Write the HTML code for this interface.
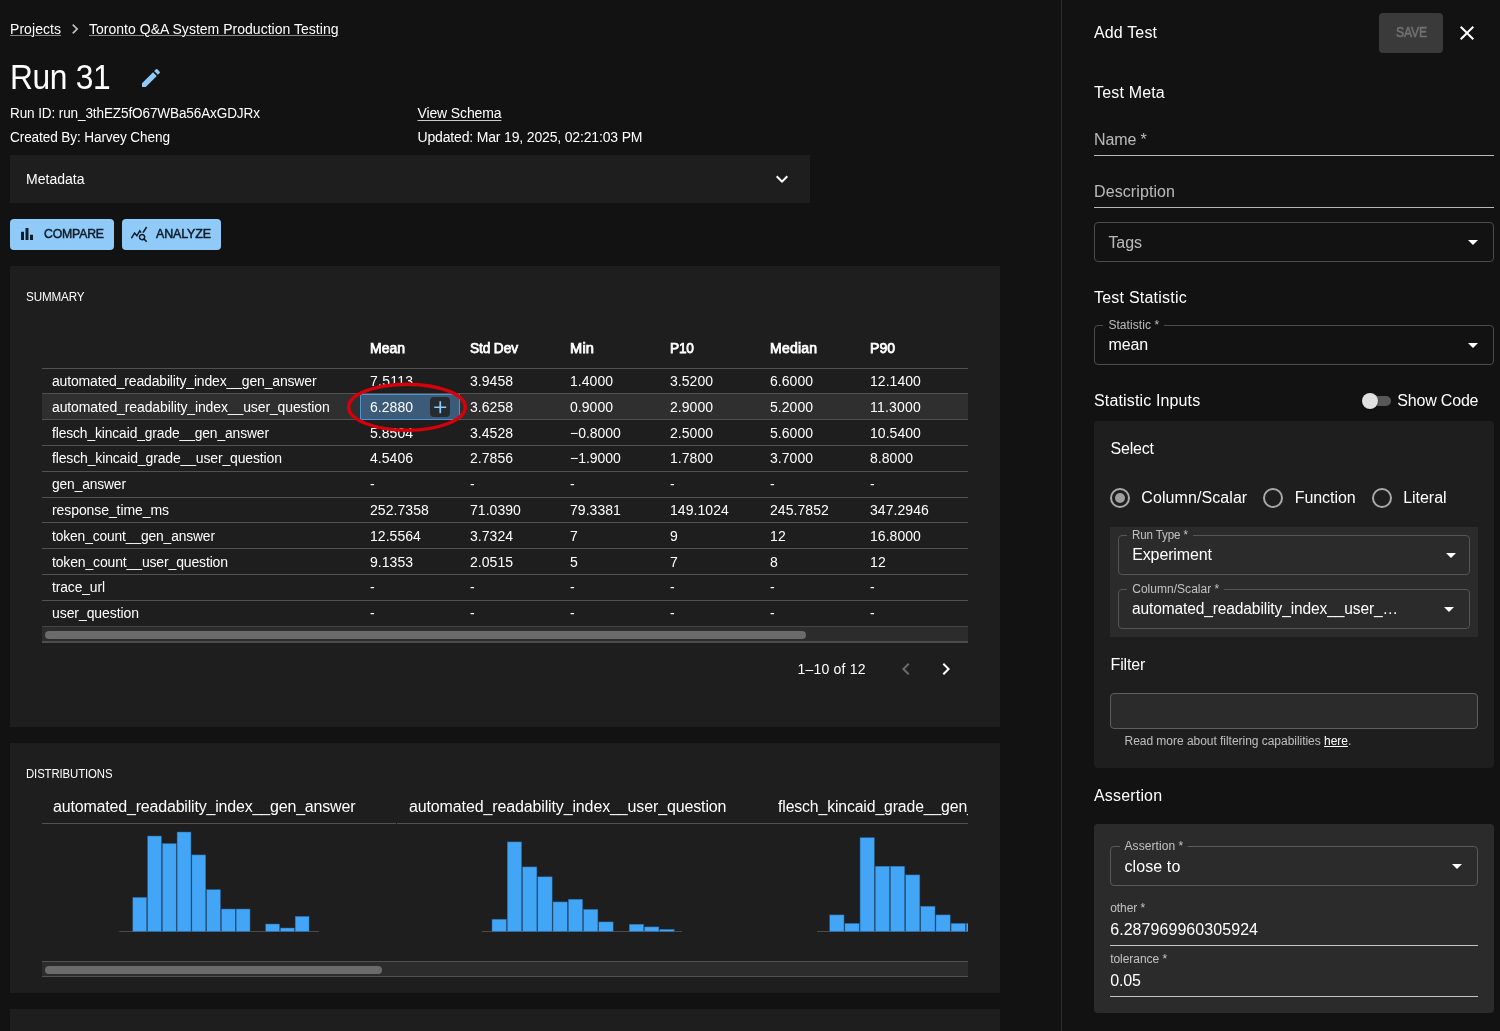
<!DOCTYPE html>
<html lang="en"><head><meta charset="utf-8"><title>Run 31</title><style>
html,body{margin:0;padding:0}
body{width:1500px;height:1031px;overflow:hidden;background:#121212;color:#fff;font-family:"Liberation Sans",sans-serif;position:relative}
.t{position:absolute;white-space:nowrap;color:#fff}
.root{position:absolute;left:0;top:0;width:1500px;height:1031px;overflow:hidden;will-change:transform}
.u{text-decoration:underline;text-decoration-thickness:1px;text-underline-offset:1px;text-decoration-color:rgba(255,255,255,.5)}
.u2{text-underline-offset:2px;text-decoration-color:rgba(255,255,255,.78)}
.sec{color:rgba(255,255,255,.7)}
.b{font-weight:bold}
svg{position:absolute;overflow:visible}
.m{-webkit-text-stroke:.5px currentColor}
.m2{-webkit-text-stroke:.75px currentColor}
</style></head><body>
<div class="root">
<span class="t u" style="font-size: 14px; line-height: 16px; left: 10px; top: 21px; letter-spacing: 0.06px;">Projects</span>
<svg style="left:64.75px;top:19.1px" width="20" height="20" viewBox="0 0 24 24"><path fill="#bdbdbd" d="M10 6 8.59 7.41 13.17 12l-4.58 4.59L10 18l6-6z"></path></svg>
<span class="t u" style="font-size: 14px; line-height: 16px; left: 89px; top: 21px; letter-spacing: 0.02px;">Toronto Q&amp;A System Production Testing</span>
<span class="t" style="font-size: 35px; line-height: 39px; left: 9.5px; top: 57px; letter-spacing: -0.374px; transform: scaleX(0.9063); transform-origin: 0px 50%;">Run 31</span>
<svg style="left:139px;top:65.8px" width="24" height="24" viewBox="0 0 24 24"><path fill="#90caf9" d="M3 17.25V21h3.75L17.81 9.94l-3.750-3.75zM20.71 7.040c.39-.39.39-1.020 0-1.410l-2.340-2.340a.9959.9959 0 0 0-1.410 0l-1.830 1.830 3.750 3.750z"></path></svg>
<span class="t" style="font-size: 14px; line-height: 16px; left: 10px; top: 105px; letter-spacing: -0.123px; transform: scaleX(0.9683); transform-origin: 0px 50%;">Run ID: run_3thEZ5fO67WBa56AxGDJRx</span>
<span class="t" style="font-size: 14px; line-height: 16px; left: 10px; top: 129px; letter-spacing: -0.112px; transform: scaleX(0.9713); transform-origin: 0px 50%;">Created By: Harvey Cheng</span>
<span class="t u u2" style="font-size: 14px; line-height: 16px; left: 417.5px; top: 105px; letter-spacing: -0.134px;">View Schema</span>
<span class="t" style="font-size: 14px; line-height: 16px; left: 417.5px; top: 129px; letter-spacing: -0.163px;">Updated: Mar 19, 2025, 02:21:03 PM</span>
<div style="position:absolute;left:10px;top:155px;width:800px;height:48px;background:#1e1e1e"></div>
<span class="t" style="font-size: 14px; line-height: 16px; left: 26px; top: 171px; letter-spacing: 0.018px;">Metadata</span>
<svg style="left:769.5px;top:167px" width="24" height="24" viewBox="0 0 24 24"><path fill="#fff" d="M16.59 8.59 12 13.17 7.41 8.59 6 10l6 6 6-6z"></path></svg>
<div style="position:absolute;left:10px;top:219px;width:104px;height:31px;background:#90caf9;border-radius:4px"></div>
<svg style="left:18px;top:224.5px" width="18" height="18" viewBox="0 0 24 24"><path fill="#0f1c29" d="M4 9h4v11H4zm12 4h4v7h-4zm-6-9h4v16h-4z"></path></svg>
<span class="t m" style="color: rgb(15, 28, 41); font-size: 13px; line-height: 15px; left: 44px; top: 226px; letter-spacing: -0.172px; transform: scaleX(0.9414); transform-origin: 0px 50%;">COMPARE</span>
<div style="position:absolute;left:122px;top:219px;width:99px;height:31px;background:#90caf9;border-radius:4px"></div>
<svg style="left:130px;top:225px" width="18" height="18" viewBox="0 0 24 24"><path fill="#0f1c29" d="M19.88 18.470c.44-.7.7-1.510.7-2.390 0-2.490-2.010-4.500-4.500-4.500s-4.500 2.010-4.500 4.500 2.010 4.500 4.490 4.500c.88 0 1.700-.26 2.390-.7L21.580 23 23 21.580zm-3.800.11c-1.380 0-2.500-1.120-2.500-2.500s1.120-2.500 2.500-2.500 2.500 1.120 2.500 2.500-1.120 2.500-2.500 2.500m-.36-8.500c-.74.020-1.450.18-2.100.45l-.55-.83-3.800 6.180-3.010-3.520-3.630 5.810L1 17l5-8 3 3.500L13 6zm2.590.5c-.64-.28-1.330-.45-2.050-.49L21.380 2 23 3.180z"></path></svg>
<span class="t m" style="color: rgb(15, 28, 41); font-size: 13px; line-height: 15px; left: 156px; top: 226px; letter-spacing: -0.152px; transform: scaleX(0.9587); transform-origin: 0px 50%;">ANALYZE</span>
<div style="position:absolute;left:10px;top:266px;width:990px;height:461px;background:#1e1e1e"></div>
<span class="t" style="font-size: 12px; line-height: 14px; left: 25.5px; top: 290px; letter-spacing: -0.157px; transform: scaleX(0.9721); transform-origin: 0px 50%;">SUMMARY</span>
<span class="t m2" style="font-size: 14px; line-height: 16px; left: 370px; top: 340px; letter-spacing: -0.01px;">Mean</span>
<span class="t m2" style="font-size: 14px; line-height: 16px; left: 470px; top: 340px; letter-spacing: -0.127px; transform: scaleX(0.9786); transform-origin: 0px 50%;">Std Dev</span>
<span class="t m2" style="font-size: 14px; line-height: 16px; left: 570px; top: 340px; letter-spacing: 0.216px; transform: scaleX(1.0437); transform-origin: 0px 50%;">Min</span>
<span class="t m2" style="font-size: 14px; line-height: 16px; left: 670px; top: 340px; letter-spacing: -0.191px; transform: scaleX(0.978); transform-origin: 0px 50%;">P10</span>
<span class="t m2" style="font-size: 14px; line-height: 16px; left: 770px; top: 340px; letter-spacing: 0.216px;">Median</span>
<span class="t m2" style="font-size: 14px; line-height: 16px; left: 870px; top: 340px; letter-spacing: 0.039px;">P90</span>
<div style="position:absolute;left:42px;top:393px;width:926px;height:27px;background:#2f2f2f"></div>
<div style="position:absolute;left:42px;top:368px;width:926px;height:1px;background:#515151"></div>
<div style="position:absolute;left:42px;top:393px;width:926px;height:1px;background:#515151"></div>
<div style="position:absolute;left:42px;top:419px;width:926px;height:1px;background:#515151"></div>
<div style="position:absolute;left:42px;top:445px;width:926px;height:1px;background:#515151"></div>
<div style="position:absolute;left:42px;top:471px;width:926px;height:1px;background:#515151"></div>
<div style="position:absolute;left:42px;top:497px;width:926px;height:1px;background:#515151"></div>
<div style="position:absolute;left:42px;top:522px;width:926px;height:1px;background:#515151"></div>
<div style="position:absolute;left:42px;top:548px;width:926px;height:1px;background:#515151"></div>
<div style="position:absolute;left:42px;top:574px;width:926px;height:1px;background:#515151"></div>
<div style="position:absolute;left:42px;top:600px;width:926px;height:1px;background:#515151"></div>
<div style="position:absolute;left:42px;top:626px;width:926px;height:1px;background:#454545"></div>
<div style="position:absolute;left:360px;top:393.5px;width:100px;height:26px;background:#3b5b78;border:1px solid #4f94d4;box-sizing:border-box"></div>
<div style="position:absolute;left:430px;top:397px;width:20px;height:20px;background:#262b30;border-radius:4px"></div>
<svg style="left:429.75px;top:396.85px" width="20.5" height="20.5" viewBox="0 0 24 24"><path fill="#90caf9" d="M19 13h-6v6h-2v-6H5v-2h6V5h2v6h6z"></path></svg>
<span class="t" style="font-size: 14px; line-height: 16px; left: 52px; top: 373px; letter-spacing: -0.165px;">automated_readability_index__gen_answer</span>
<span class="t" style="font-size: 14px; line-height: 16px; left: 370px; top: 373px; letter-spacing: 0.244px;">7.5113</span>
<span class="t" style="font-size: 14px; line-height: 16px; left: 470px; top: 373px; letter-spacing: 0.034px;">3.9458</span>
<span class="t" style="font-size: 14px; line-height: 16px; left: 570px; top: 373px; letter-spacing: 0.034px;">1.4000</span>
<span class="t" style="font-size: 14px; line-height: 16px; left: 670px; top: 373px; letter-spacing: 0.034px;">3.5200</span>
<span class="t" style="font-size: 14px; line-height: 16px; left: 770px; top: 373px; letter-spacing: 0.034px;">6.6000</span>
<span class="t" style="font-size: 14px; line-height: 16px; left: 870px; top: 373px; letter-spacing: 0.048px;">12.1400</span>
<span class="t" style="font-size: 14px; line-height: 16px; left: 52px; top: 399px; letter-spacing: -0.118px;">automated_readability_index__user_question</span>
<span class="t" style="font-size: 14px; line-height: 16px; left: 370px; top: 399px; letter-spacing: 0.034px;">6.2880</span>
<span class="t" style="font-size: 14px; line-height: 16px; left: 470px; top: 399px; letter-spacing: 0.034px;">3.6258</span>
<span class="t" style="font-size: 14px; line-height: 16px; left: 570px; top: 399px; letter-spacing: 0.034px;">0.9000</span>
<span class="t" style="font-size: 14px; line-height: 16px; left: 670px; top: 399px; letter-spacing: 0.034px;">2.9000</span>
<span class="t" style="font-size: 14px; line-height: 16px; left: 770px; top: 399px; letter-spacing: 0.034px;">5.2000</span>
<span class="t" style="font-size: 14px; line-height: 16px; left: 870px; top: 399px; letter-spacing: 0.22px;">11.3000</span>
<span class="t" style="font-size: 14px; line-height: 16px; left: 52px; top: 425px; letter-spacing: -0.11px; transform: scaleX(0.9864); transform-origin: 0px 50%;">flesch_kincaid_grade__gen_answer</span>
<span class="t" style="font-size: 14px; line-height: 16px; left: 370px; top: 425px; letter-spacing: 0.034px;">5.8504</span>
<span class="t" style="font-size: 14px; line-height: 16px; left: 470px; top: 425px; letter-spacing: 0.034px;">3.4528</span>
<span class="t" style="font-size: 14px; line-height: 16px; left: 570px; top: 425px; letter-spacing: -0.017px;">−0.8000</span>
<span class="t" style="font-size: 14px; line-height: 16px; left: 670px; top: 425px; letter-spacing: 0.034px;">2.5000</span>
<span class="t" style="font-size: 14px; line-height: 16px; left: 770px; top: 425px; letter-spacing: 0.034px;">5.6000</span>
<span class="t" style="font-size: 14px; line-height: 16px; left: 870px; top: 425px; letter-spacing: 0.048px;">10.5400</span>
<span class="t" style="font-size: 14px; line-height: 16px; left: 52px; top: 450px; letter-spacing: -0.149px;">flesch_kincaid_grade__user_question</span>
<span class="t" style="font-size: 14px; line-height: 16px; left: 370px; top: 450px; letter-spacing: 0.034px;">4.5406</span>
<span class="t" style="font-size: 14px; line-height: 16px; left: 470px; top: 450px; letter-spacing: 0.034px;">2.7856</span>
<span class="t" style="font-size: 14px; line-height: 16px; left: 570px; top: 450px; letter-spacing: -0.017px;">−1.9000</span>
<span class="t" style="font-size: 14px; line-height: 16px; left: 670px; top: 450px; letter-spacing: 0.034px;">1.7800</span>
<span class="t" style="font-size: 14px; line-height: 16px; left: 770px; top: 450px; letter-spacing: 0.034px;">3.7000</span>
<span class="t" style="font-size: 14px; line-height: 16px; left: 870px; top: 450px; letter-spacing: 0.034px;">8.8000</span>
<span class="t" style="font-size: 14px; line-height: 16px; left: 52px; top: 476px; letter-spacing: -0.129px; transform: scaleX(0.9851); transform-origin: 0px 50%;">gen_answer</span>
<span class="t" style="font-size: 14px; line-height: 16px; left: 370px; top: 476px;">-</span>
<span class="t" style="font-size: 14px; line-height: 16px; left: 470px; top: 476px;">-</span>
<span class="t" style="font-size: 14px; line-height: 16px; left: 570px; top: 476px;">-</span>
<span class="t" style="font-size: 14px; line-height: 16px; left: 670px; top: 476px;">-</span>
<span class="t" style="font-size: 14px; line-height: 16px; left: 770px; top: 476px;">-</span>
<span class="t" style="font-size: 14px; line-height: 16px; left: 870px; top: 476px;">-</span>
<span class="t" style="font-size: 14px; line-height: 16px; left: 52px; top: 502px; letter-spacing: -0.085px;">response_time_ms</span>
<span class="t" style="font-size: 14px; line-height: 16px; left: 370px; top: 502px; letter-spacing: 0.056px;">252.7358</span>
<span class="t" style="font-size: 14px; line-height: 16px; left: 470px; top: 502px; letter-spacing: 0.048px;">71.0390</span>
<span class="t" style="font-size: 14px; line-height: 16px; left: 570px; top: 502px; letter-spacing: 0.048px;">79.3381</span>
<span class="t" style="font-size: 14px; line-height: 16px; left: 670px; top: 502px; letter-spacing: 0.056px;">149.1024</span>
<span class="t" style="font-size: 14px; line-height: 16px; left: 770px; top: 502px; letter-spacing: 0.056px;">245.7852</span>
<span class="t" style="font-size: 14px; line-height: 16px; left: 870px; top: 502px; letter-spacing: 0.056px;">347.2946</span>
<span class="t" style="font-size: 14px; line-height: 16px; left: 52px; top: 528px; letter-spacing: -0.116px; transform: scaleX(0.9844); transform-origin: 0px 50%;">token_count__gen_answer</span>
<span class="t" style="font-size: 14px; line-height: 16px; left: 370px; top: 528px; letter-spacing: 0.048px;">12.5564</span>
<span class="t" style="font-size: 14px; line-height: 16px; left: 470px; top: 528px; letter-spacing: 0.034px;">3.7324</span>
<span class="t" style="font-size: 14px; line-height: 16px; left: 570px; top: 528px;">7</span>
<span class="t" style="font-size: 14px; line-height: 16px; left: 670px; top: 528px;">9</span>
<span class="t" style="font-size: 14px; line-height: 16px; left: 770px; top: 528px; letter-spacing: 0.122px;">12</span>
<span class="t" style="font-size: 14px; line-height: 16px; left: 870px; top: 528px; letter-spacing: 0.048px;">16.8000</span>
<span class="t" style="font-size: 14px; line-height: 16px; left: 52px; top: 554px; letter-spacing: -0.152px;">token_count__user_question</span>
<span class="t" style="font-size: 14px; line-height: 16px; left: 370px; top: 554px; letter-spacing: 0.034px;">9.1353</span>
<span class="t" style="font-size: 14px; line-height: 16px; left: 470px; top: 554px; letter-spacing: 0.034px;">2.0515</span>
<span class="t" style="font-size: 14px; line-height: 16px; left: 570px; top: 554px;">5</span>
<span class="t" style="font-size: 14px; line-height: 16px; left: 670px; top: 554px;">7</span>
<span class="t" style="font-size: 14px; line-height: 16px; left: 770px; top: 554px;">8</span>
<span class="t" style="font-size: 14px; line-height: 16px; left: 870px; top: 554px; letter-spacing: 0.122px;">12</span>
<span class="t" style="font-size: 14px; line-height: 16px; left: 52px; top: 579px; letter-spacing: -0.103px; transform: scaleX(0.988); transform-origin: 0px 50%;">trace_url</span>
<span class="t" style="font-size: 14px; line-height: 16px; left: 370px; top: 579px;">-</span>
<span class="t" style="font-size: 14px; line-height: 16px; left: 470px; top: 579px;">-</span>
<span class="t" style="font-size: 14px; line-height: 16px; left: 570px; top: 579px;">-</span>
<span class="t" style="font-size: 14px; line-height: 16px; left: 670px; top: 579px;">-</span>
<span class="t" style="font-size: 14px; line-height: 16px; left: 770px; top: 579px;">-</span>
<span class="t" style="font-size: 14px; line-height: 16px; left: 870px; top: 579px;">-</span>
<span class="t" style="font-size: 14px; line-height: 16px; left: 52px; top: 605px; letter-spacing: -0.079px;">user_question</span>
<span class="t" style="font-size: 14px; line-height: 16px; left: 370px; top: 605px;">-</span>
<span class="t" style="font-size: 14px; line-height: 16px; left: 470px; top: 605px;">-</span>
<span class="t" style="font-size: 14px; line-height: 16px; left: 570px; top: 605px;">-</span>
<span class="t" style="font-size: 14px; line-height: 16px; left: 670px; top: 605px;">-</span>
<span class="t" style="font-size: 14px; line-height: 16px; left: 770px; top: 605px;">-</span>
<span class="t" style="font-size: 14px; line-height: 16px; left: 870px; top: 605px;">-</span>
<svg style="left:340px;top:375px" width="140" height="64" viewBox="340 375 140 64"><ellipse cx="407" cy="407.2" rx="58.3" ry="23" fill="none" stroke="#d6000b" stroke-width="3.4"></ellipse></svg>
<div style="position:absolute;left:42px;top:627px;width:926px;height:14px;background:#2c2c2c"></div>
<div style="position:absolute;left:42px;top:641px;width:926px;height:2px;background:#4c4c4c"></div>
<div style="position:absolute;left:45px;top:631px;width:761px;height:8px;background:#6b6b6b;border-radius:4px"></div>
<span class="t" style="font-size: 14px; line-height: 16px; left: 797.5px; top: 661px; letter-spacing: 0.203px;">1–10 of 12</span>
<svg style="left:893.6px;top:656.8px" width="24" height="24" viewBox="0 0 24 24"><path fill="#6b6b6b" d="M15.41 7.41 14 6l-6 6 6 6 1.410-1.410L10.830 12z"></path></svg>
<svg style="left:934.2px;top:656.8px" width="24" height="24" viewBox="0 0 24 24"><path fill="#fff" d="M10 6 8.59 7.41 13.17 12l-4.580 4.590L10 18l6-6z"></path></svg>
<div style="position:absolute;left:10px;top:743px;width:990px;height:250px;background:#1e1e1e"></div>
<div style="position:absolute;left:10px;top:1009px;width:990px;height:30px;background:#1e1e1e"></div>
<span class="t" style="font-size: 12px; line-height: 14px; left: 25.5px; top: 767px; letter-spacing: -0.122px; transform: scaleX(0.9484); transform-origin: 0px 50%;">DISTRIBUTIONS</span>
<div style="position:absolute;left:42px;top:790px;width:926px;height:172px;overflow:hidden">
<span class="t" style="font-size: 16px; line-height: 17px; left: 11px; top: 8px; letter-spacing: -0.186px;">automated_readability_index__gen_answer</span>
<span class="t" style="font-size: 16px; line-height: 17px; left: 367px; top: 8px; letter-spacing: -0.132px;">automated_readability_index__user_question</span>
<span class="t" style="font-size: 16px; line-height: 17px; left: 736px; top: 8px; letter-spacing: -0.125px; transform: scaleX(0.9864); transform-origin: 0px 50%;">flesch_kincaid_grade__gen_answer</span>
<div style="position:absolute;left:0px;top:33px;width:354px;height:1px;background:#515151"></div>
<div style="position:absolute;left:355px;top:33px;width:670px;height:1px;background:#515151"></div>
<svg style="left:0;top:0" width="926" height="172" viewBox="42 790 926 172"><rect x="119.2" y="931.0" width="199.7" height="1" fill="#4a4a4a"></rect><rect x="132.80" y="897.30" width="13.91" height="34.20" fill="#42a5f5" stroke="#245f96" stroke-width="0.5"></rect><rect x="147.56" y="836.00" width="13.91" height="95.50" fill="#42a5f5" stroke="#245f96" stroke-width="0.5"></rect><rect x="162.32" y="843.50" width="13.91" height="88.00" fill="#42a5f5" stroke="#245f96" stroke-width="0.5"></rect><rect x="177.08" y="832.00" width="13.91" height="99.50" fill="#42a5f5" stroke="#245f96" stroke-width="0.5"></rect><rect x="191.84" y="854.90" width="13.91" height="76.60" fill="#42a5f5" stroke="#245f96" stroke-width="0.5"></rect><rect x="206.60" y="889.60" width="13.91" height="41.90" fill="#42a5f5" stroke="#245f96" stroke-width="0.5"></rect><rect x="221.36" y="909.00" width="13.91" height="22.50" fill="#42a5f5" stroke="#245f96" stroke-width="0.5"></rect><rect x="236.12" y="909.00" width="13.91" height="22.50" fill="#42a5f5" stroke="#245f96" stroke-width="0.5"></rect><rect x="265.64" y="924.00" width="13.91" height="7.50" fill="#42a5f5" stroke="#245f96" stroke-width="0.5"></rect><rect x="280.40" y="928.00" width="13.91" height="3.50" fill="#42a5f5" stroke="#245f96" stroke-width="0.5"></rect><rect x="295.16" y="916.30" width="13.91" height="15.20" fill="#42a5f5" stroke="#245f96" stroke-width="0.5"></rect><rect x="481.9" y="931.0" width="200.1" height="1" fill="#4a4a4a"></rect><rect x="492.00" y="919.20" width="14.40" height="12.30" fill="#42a5f5" stroke="#245f96" stroke-width="0.5"></rect><rect x="507.25" y="841.90" width="14.40" height="89.60" fill="#42a5f5" stroke="#245f96" stroke-width="0.5"></rect><rect x="522.50" y="866.90" width="14.40" height="64.60" fill="#42a5f5" stroke="#245f96" stroke-width="0.5"></rect><rect x="537.75" y="876.80" width="14.40" height="54.70" fill="#42a5f5" stroke="#245f96" stroke-width="0.5"></rect><rect x="553.00" y="901.90" width="14.40" height="29.60" fill="#42a5f5" stroke="#245f96" stroke-width="0.5"></rect><rect x="568.25" y="899.20" width="14.40" height="32.30" fill="#42a5f5" stroke="#245f96" stroke-width="0.5"></rect><rect x="583.50" y="909.30" width="14.40" height="22.20" fill="#42a5f5" stroke="#245f96" stroke-width="0.5"></rect><rect x="598.75" y="921.90" width="14.40" height="9.60" fill="#42a5f5" stroke="#245f96" stroke-width="0.5"></rect><rect x="629.25" y="924.20" width="14.40" height="7.30" fill="#42a5f5" stroke="#245f96" stroke-width="0.5"></rect><rect x="644.50" y="926.90" width="14.40" height="4.60" fill="#42a5f5" stroke="#245f96" stroke-width="0.5"></rect><rect x="659.75" y="929.30" width="14.40" height="2.20" fill="#42a5f5" stroke="#245f96" stroke-width="0.5"></rect><rect x="817.0" y="931.0" width="200.0" height="1" fill="#4a4a4a"></rect><rect x="829.70" y="914.90" width="14.32" height="16.60" fill="#42a5f5" stroke="#245f96" stroke-width="0.5"></rect><rect x="844.87" y="923.30" width="14.32" height="8.20" fill="#42a5f5" stroke="#245f96" stroke-width="0.5"></rect><rect x="860.04" y="837.60" width="14.32" height="93.90" fill="#42a5f5" stroke="#245f96" stroke-width="0.5"></rect><rect x="875.21" y="866.20" width="14.32" height="65.30" fill="#42a5f5" stroke="#245f96" stroke-width="0.5"></rect><rect x="890.38" y="866.20" width="14.32" height="65.30" fill="#42a5f5" stroke="#245f96" stroke-width="0.5"></rect><rect x="905.55" y="874.90" width="14.32" height="56.60" fill="#42a5f5" stroke="#245f96" stroke-width="0.5"></rect><rect x="920.72" y="906.20" width="14.32" height="25.30" fill="#42a5f5" stroke="#245f96" stroke-width="0.5"></rect><rect x="935.89" y="914.90" width="14.32" height="16.60" fill="#42a5f5" stroke="#245f96" stroke-width="0.5"></rect><rect x="951.06" y="923.30" width="14.32" height="8.20" fill="#42a5f5" stroke="#245f96" stroke-width="0.5"></rect><rect x="966.23" y="923.30" width="14.32" height="8.20" fill="#42a5f5" stroke="#245f96" stroke-width="0.5"></rect><rect x="981.40" y="927.50" width="14.32" height="4.00" fill="#42a5f5" stroke="#245f96" stroke-width="0.5"></rect><rect x="996.57" y="929.50" width="14.32" height="2.00" fill="#42a5f5" stroke="#245f96" stroke-width="0.5"></rect></svg>
</div>
<div style="position:absolute;left:42px;top:961px;width:926px;height:1px;background:#515151"></div>
<div style="position:absolute;left:42px;top:962px;width:926px;height:14px;background:#2c2c2c"></div>
<div style="position:absolute;left:42px;top:976px;width:926px;height:1px;background:#515151"></div>
<div style="position:absolute;left:45px;top:966px;width:336.5px;height:8px;background:#6b6b6b;border-radius:4px"></div>
<div style="position:absolute;left:1061px;top:0px;width:439px;height:1031px;background:#121212;border-left:1px solid #2c2c2c;box-sizing:border-box"></div>
<span class="t" style="font-size: 16px; line-height: 17px; left: 1094px; top: 24px; letter-spacing: 0.147px;">Add Test</span>
<div style="position:absolute;left:1379px;top:13px;width:64px;height:40px;background:#3a3a3a;border-radius:4px"></div>
<span class="t m" style="color: rgb(114, 114, 114); font-size: 14px; line-height: 16px; left: 1395.6px; top: 24px; letter-spacing: -0.209px; transform: scaleX(0.8687); transform-origin: 0px 50%;">SAVE</span>
<svg style="left:1455.3px;top:21.1px" width="24" height="24" viewBox="0 0 24 24"><path fill="#fff" d="M19 6.41 17.59 5 12 10.59 6.41 5 5 6.41 10.59 12 5 17.59 6.41 19 12 13.41 17.59 19 19 17.59 13.41 12z"></path></svg>
<span class="t" style="font-size: 16px; line-height: 17px; left: 1094px; top: 84px; letter-spacing: 0.168px;">Test Meta</span>
<span class="t sec" style="font-size: 16px; line-height: 17px; left: 1094px; top: 131px; letter-spacing: -0.112px;">Name *</span>
<div style="position:absolute;left:1094px;top:155px;width:400px;height:1px;background:#b8b8b8"></div>
<span class="t sec" style="font-size: 16px; line-height: 17px; left: 1094px; top: 183px; letter-spacing: 0.097px;">Description</span>
<div style="position:absolute;left:1094px;top:207px;width:400px;height:1px;background:#b8b8b8"></div>
<div style="position:absolute;left:1094px;top:222px;width:400px;height:40px;border:1px solid #4b4b4b;border-radius:4px;box-sizing:border-box"></div>
<span class="t sec" style="font-size: 16px; line-height: 17px; left: 1108.4px; top: 234px; letter-spacing: -0.032px;">Tags</span>
<svg style="left:1461.2px;top:230.1px" width="24" height="24" viewBox="0 0 24 24"><path fill="#fff" d="m7 10 5 5 5-5z"></path></svg>
<span class="t" style="font-size: 16px; line-height: 17px; left: 1094px; top: 289px; letter-spacing: 0.222px;">Test Statistic</span>
<div style="position:absolute;left:1094px;top:325px;width:400px;height:40px;border:1px solid #4b4b4b;border-radius:4px;box-sizing:border-box"></div>
<div style="position:absolute;left:1103.4px;top:325px;width:60.7px;height:2px;background:#121212"></div>
<span class="t sec" style="font-size: 12px; line-height: 14px; left: 1108.4px; top: 318px; letter-spacing: 0.068px;">Statistic *</span>
<span class="t" style="font-size: 16px; line-height: 17px; left: 1108.4px; top: 336px; letter-spacing: -0.077px;">mean</span>
<svg style="left:1461.2px;top:333.4px" width="24" height="24" viewBox="0 0 24 24"><path fill="#fff" d="m7 10 5 5 5-5z"></path></svg>
<span class="t" style="font-size: 16px; line-height: 17px; left: 1094px; top: 392px; letter-spacing: 0.144px;">Statistic Inputs</span>
<div style="position:absolute;left:1365px;top:396px;width:26px;height:10px;background:#575757;border-radius:5px"></div>
<div style="position:absolute;left:1362px;top:393px;width:16px;height:16px;background:#e0e0e0;border-radius:50%;box-shadow:0 1px 2px rgba(0,0,0,.5)"></div>
<span class="t" style="font-size: 16px; line-height: 17px; left: 1397.3px; top: 392px; letter-spacing: -0.19px;">Show Code</span>
<div style="position:absolute;left:1094px;top:421px;width:400px;height:347px;background:#1e1e1e;border-radius:4px"></div>
<span class="t" style="font-size: 16px; line-height: 17px; left: 1110.5px; top: 440px; letter-spacing: -0.214px;">Select</span>
<svg style="left:1107.9px;top:485.9px" width="24" height="24" viewBox="0 0 24 24"><circle cx="12" cy="12" r="9" fill="none" stroke="#a9a9a9" stroke-width="2"></circle><circle cx="12" cy="12" r="5" fill="#9e9e9e"></circle></svg>
<svg style="left:1261px;top:485.9px" width="24" height="24" viewBox="0 0 24 24"><circle cx="12" cy="12" r="9" fill="none" stroke="#a9a9a9" stroke-width="2"></circle></svg>
<svg style="left:1369.9px;top:485.9px" width="24" height="24" viewBox="0 0 24 24"><circle cx="12" cy="12" r="9" fill="none" stroke="#a9a9a9" stroke-width="2"></circle></svg>
<span class="t" style="font-size: 16px; line-height: 17px; left: 1141.3px; top: 489px; letter-spacing: 0.08px;">Column/Scalar</span>
<span class="t" style="font-size: 16px; line-height: 17px; left: 1294.7px; top: 489px; letter-spacing: -0.054px;">Function</span>
<span class="t" style="font-size: 16px; line-height: 17px; left: 1403.2px; top: 489px; letter-spacing: -0.03px;">Literal</span>
<div style="position:absolute;left:1110px;top:527px;width:368px;height:110px;background:#2b2b2b"></div>
<div style="position:absolute;left:1118px;top:535px;width:352px;height:40px;border:1px solid #555;border-radius:4px;box-sizing:border-box"></div>
<div style="position:absolute;left:1127.2px;top:535px;width:66px;height:2px;background:#2b2b2b"></div>
<span class="t sec" style="font-size: 12px; line-height: 14px; left: 1132.2px; top: 528px; letter-spacing: -0.103px; transform: scaleX(0.9616); transform-origin: 0px 50%;">Run Type *</span>
<span class="t" style="font-size: 16px; line-height: 17px; left: 1132.2px; top: 546px; letter-spacing: -0.125px;">Experiment</span>
<svg style="left:1439px;top:542.9px" width="24" height="24" viewBox="0 0 24 24"><path fill="#fff" d="m7 10 5 5 5-5z"></path></svg>
<div style="position:absolute;left:1118px;top:589px;width:352px;height:40px;border:1px solid #555;border-radius:4px;box-sizing:border-box"></div>
<div style="position:absolute;left:1127.2px;top:589px;width:97.1px;height:2px;background:#2b2b2b"></div>
<span class="t sec" style="font-size: 12px; line-height: 14px; left: 1132.2px; top: 582px; letter-spacing: 0.028px;">Column/Scalar *</span>
<span class="t" style="font-size: 16px; line-height: 17px; left: 1132.2px; top: 600px; letter-spacing: -0.127px; transform: scaleX(0.9704); transform-origin: 0px 50%;">automated_readability_index__user_…</span>
<svg style="left:1437.3px;top:597.1px" width="24" height="24" viewBox="0 0 24 24"><path fill="#fff" d="m7 10 5 5 5-5z"></path></svg>
<span class="t" style="font-size: 16px; line-height: 17px; left: 1110.5px; top: 656px; letter-spacing: -0.133px;">Filter</span>
<div style="position:absolute;left:1110px;top:693px;width:368px;height:36px;background:#2b2b2b;border:1px solid #5e5e5e;border-radius:4px;box-sizing:border-box"></div>
<span class="t sec" style="font-size: 12px; line-height: 14px; left: 1124.5px; top: 734px; letter-spacing: -0.032px;">Read more about filtering capabilities <span class="u" style="color:#fff;text-decoration-color:#fff">here</span>.</span>
<span class="t" style="font-size: 16px; line-height: 17px; left: 1094px; top: 787px; letter-spacing: 0.175px;">Assertion</span>
<div style="position:absolute;left:1094px;top:824px;width:400px;height:189px;background:#2b2b2b;border-radius:4px"></div>
<div style="position:absolute;left:1110px;top:846px;width:368px;height:40px;border:1px solid #5a5a5a;border-radius:4px;box-sizing:border-box"></div>
<div style="position:absolute;left:1119.5px;top:846px;width:68.7px;height:2px;background:#2b2b2b"></div>
<span class="t sec" style="font-size: 12px; line-height: 14px; left: 1124.5px; top: 839px; letter-spacing: 0.067px;">Assertion *</span>
<span class="t" style="font-size: 16px; line-height: 17px; left: 1124.5px; top: 858px; letter-spacing: 0.094px;">close to</span>
<svg style="left:1444.9px;top:854.2px" width="24" height="24" viewBox="0 0 24 24"><path fill="#fff" d="m7 10 5 5 5-5z"></path></svg>
<span class="t sec" style="font-size: 12px; line-height: 14px; left: 1110.2px; top: 901px; letter-spacing: -0.077px;">other *</span>
<span class="t" style="font-size: 16px; line-height: 17px; left: 1110.2px; top: 921px; letter-spacing: 0.061px;">6.287969960305924</span>
<div style="position:absolute;left:1110px;top:945px;width:368px;height:1px;background:#c4c4c4"></div>
<span class="t sec" style="font-size: 12px; line-height: 14px; left: 1110.2px; top: 952px; letter-spacing: -0.048px;">tolerance *</span>
<span class="t" style="font-size: 16px; line-height: 17px; left: 1110.2px; top: 972px; letter-spacing: -0.114px;">0.05</span>
<div style="position:absolute;left:1110px;top:996px;width:368px;height:1px;background:#c4c4c4"></div>
</div>

</body></html>
